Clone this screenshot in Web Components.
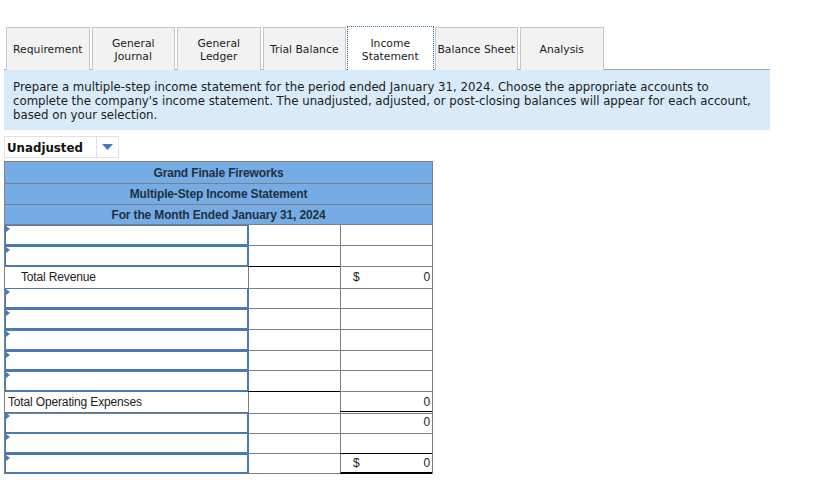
<!DOCTYPE html>
<html>
<head>
<meta charset="utf-8">
<style>
  html, body { margin: 0; background: #fff; }
  body { padding: 27px 0 0 4px; width: 766px; }
</style>
</head>
<body>
<hw-tabs>
  <hw-tab>Requirement</hw-tab>
  <hw-tab>General<br>Journal</hw-tab>
  <hw-tab>General<br>Ledger</hw-tab>
  <hw-tab>Trial Balance</hw-tab>
  <hw-tab active>Income<br>Statement</hw-tab>
  <hw-tab>Balance Sheet</hw-tab>
  <hw-tab>Analysis</hw-tab>
</hw-tabs>
<hw-note>Prepare a multiple-step income statement for the period ended January 31, 2024. Choose the appropriate accounts to complete the company's income statement. The unadjusted, adjusted, or post-closing balances will appear for each account, based on your selection.</hw-note>
<hw-select>Unadjusted</hw-select>
<fin-table>
  <fin-head size="first">Grand Finale Fireworks</fin-head>
  <fin-head>Multiple-Step Income Statement</fin-head>
  <fin-head size="last">For the Month Ended January 31, 2024</fin-head>
  <fin-row input></fin-row>
  <fin-row input></fin-row>
  <fin-row indent mid-top dollar amount="0">Total Revenue</fin-row>
  <fin-row input></fin-row>
  <fin-row input></fin-row>
  <fin-row input></fin-row>
  <fin-row input short></fin-row>
  <fin-row input></fin-row>
  <fin-row mid-top short amount="0">Total Operating Expenses</fin-row>
  <fin-row input end-top amount="0"></fin-row>
  <fin-row input></fin-row>
  <fin-row input end-top double short dollar amount="0"></fin-row>
</fin-table>
<script>
class HwTabs extends HTMLElement {
  constructor() {
    super();
    this.attachShadow({ mode: 'open' });
    this.shadowRoot.innerHTML = `
      <style>
        :host { display: flex; gap: 2px; padding-left: 2px; height: 42px; }
      </style>
      <slot></slot>`;
  }
}
customElements.define('hw-tabs', HwTabs);

class HwTab extends HTMLElement {
  constructor() {
    super();
    this.attachShadow({ mode: 'open' });
    this.shadowRoot.innerHTML = `
      <style>
        :host {
          display: flex;
          align-items: center;
          justify-content: center;
          box-sizing: border-box;
          width: 83.5px;
          height: 43px;
          padding-top: 1px;
          background: #f2f2f2;
          border: 1px solid #c7c7c7;
          border-bottom: 0;
          font: 10.8px/13px "DejaVu Sans", Verdana, sans-serif;
          color: #1c1c1c;
          text-align: center;
          white-space: nowrap;
        }
        :host([active]) {
          background: #fff;
          width: 86.5px;
          height: 44px;
          margin: -1px -1px 0 -1px;
          padding-top: 2px;
          border: 1px dotted #2f6fb0;
          border-bottom: 0;
        }
      </style>
      <slot></slot>`;
  }
}
customElements.define('hw-tab', HwTab);

class HwNote extends HTMLElement {
  constructor() {
    super();
    this.attachShadow({ mode: 'open' });
    this.shadowRoot.innerHTML = `
      <style>
        :host {
          display: block;
          box-sizing: border-box;
          height: 61px;
          padding: 10px 9px 0 9px;
          background: #d9ebf9;
          border-top: 1px solid #a6a6a6;
          font: 11.75px/14px "DejaVu Sans", Verdana, sans-serif;
          color: #1c1c1c;
        }
      </style>
      <slot></slot>`;
  }
}
customElements.define('hw-note', HwNote);

class HwSelect extends HTMLElement {
  constructor() {
    super();
    this.attachShadow({ mode: 'open' });
    this.shadowRoot.innerHTML = `
      <style>
        :host {
          display: flex;
          box-sizing: border-box;
          width: 115px;
          height: 22px;
          margin: 6px 0 3px;
          border: 1px solid #e2e2e2;
          font: bold 11.8px/22px "DejaVu Sans", Verdana, sans-serif;
          color: #111;
        }
        .label { flex: 1; padding-left: 2px; border-right: 1px solid #e2e2e2; }
        .arrow { width: 21px; display: flex; align-items: center; justify-content: center; }
      </style>
      <span class="label"><slot></slot></span>
      <span class="arrow">
        <svg width="11" height="6" viewBox="0 0 11 6"><polygon points="0,0 11,0 5.5,6" fill="#3f7cc4"/></svg>
      </span>`;
  }
}
customElements.define('hw-select', HwSelect);

class FinTable extends HTMLElement {
  constructor() {
    super();
    this.attachShadow({ mode: 'open' });
    this.shadowRoot.innerHTML = `
      <style>
        :host {
          display: block;
          box-sizing: border-box;
          width: 429px;
          border: 1px solid #7f7f7f;
          border-bottom: 0;
          font: 12px "Liberation Sans", Arial, sans-serif;
          letter-spacing: -0.15px;
          color: #1c1c1c;
        }
      </style>
      <slot></slot>`;
  }
}
customElements.define('fin-table', FinTable);

class FinHead extends HTMLElement {
  constructor() {
    super();
    this.attachShadow({ mode: 'open' });
    this.shadowRoot.innerHTML = `
      <style>
        :host {
          display: block;
          box-sizing: border-box;
          height: 21px;
          background: #75ace6;
          border-bottom: 1px solid #7f7f7f;
          font-weight: bold;
          line-height: 20px;
          text-align: center;
          color: #22303f;
        }
        :host([size="first"]) { height: 22px; line-height: 22px; }
        :host([size="last"]) { height: 20px; line-height: 20px; }
      </style>
      <slot></slot>`;
  }
}
customElements.define('fin-head', FinHead);

class FinRow extends HTMLElement {
  constructor() {
    super();
    this.attachShadow({ mode: 'open' });
    const amount = this.getAttribute('amount');
    const dollar = this.hasAttribute('dollar') ? '$' : '';
    this.shadowRoot.innerHTML = `
      <style>
        :host {
          display: grid;
          grid-template-columns: 243px 92px 1fr;
          box-sizing: border-box;
          height: 21px;
          line-height: 21px;
        }
        :host([short]) { height: 20px; }
        :host([double]) { line-height: 18px; }
        .cell { box-sizing: border-box; border-bottom: 1px solid #7f7f7f; }
        .name { position: relative; white-space: nowrap; padding-left: 3px; }
        .mid { border-left: 1px solid #7f7f7f; }
        .end {
          display: flex;
          justify-content: space-between;
          padding: 0 2px 0 12px;
          border-left: 1px solid #7f7f7f;
        }
        :host([indent]) .name { padding-left: 16px; }
        :host([input]) .name { border: 1px solid #4a7ab0; border-bottom-width: 2px; }
        :host([input]) .mid { border-left-color: #4a7ab0; }
        :host([input]) .name::before {
          content: "";
          position: absolute;
          left: 0;
          top: 0;
          border-left: 4px solid #3f7cc4;
          border-top: 3px solid transparent;
          border-bottom: 3px solid transparent;
        }
        :host([mid-top]) .mid { box-shadow: 0 -1px 0 #000; }
        :host([end-top]) .end { box-shadow: 0 -1px 0 #000; }
        :host([double]) .end { border-bottom: 2px solid #000; }
      </style>
      <div class="cell name"><slot></slot></div>
      <div class="cell mid"></div>
      <div class="cell end"><span>${dollar}</span><span>${amount === null ? '' : amount}</span></div>`;
  }
}
customElements.define('fin-row', FinRow);
</script>
</body>
</html>
